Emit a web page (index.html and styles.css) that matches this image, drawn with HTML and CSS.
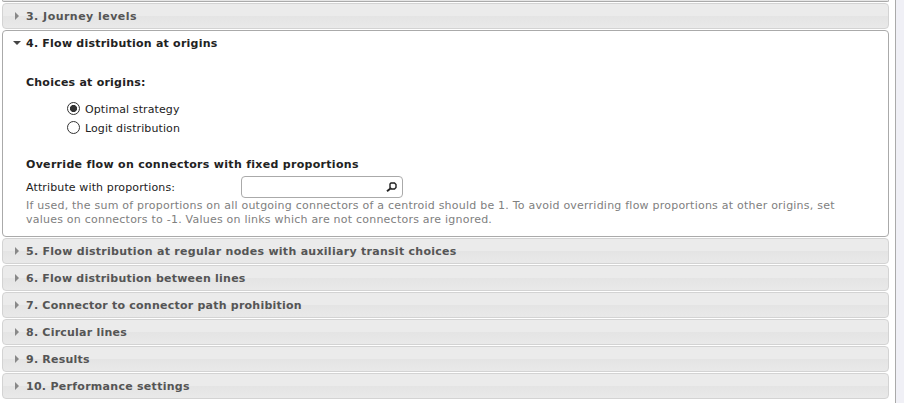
FILE: index.html
```html
<!DOCTYPE html>
<html lang="en">
<head>
<meta charset="utf-8">
<title>Transit assignment</title>
<link rel="stylesheet" href="styles.css">
</head>
<body>
<main class="page">
  <div class="accordion">
    <div class="previous"></div>
    <h3 class="header header-journey"><svg class="arrow" viewBox="0 0 8 8"><path d="M2 0v8l4-4z"/></svg><span>3. Journey levels</span></h3>
    <section class="panel">
      <h3 class="panel-title"><svg class="arrow" viewBox="0 0 8 8"><path d="M0 2h8L4 6z"/></svg><span>4. Flow distribution at origins</span></h3>
      <div class="content">
        <h4 class="choices-title">Choices at origins:</h4>
        <div class="choices">
          <label class="choice"><input type="radio" name="choice" checked><span>Optimal strategy</span></label>
          <label class="choice"><input type="radio" name="choice"><span>Logit distribution</span></label>
        </div>
        <h4 class="override-title">Override flow on connectors with fixed proportions</h4>
        <div class="field">
          <span class="field-label">Attribute with proportions:</span>
          <div class="picker"><svg class="search" viewBox="0 0 11 10"><path class="lens" d="M5 1h3.500L10 2.500v3L8.500 7H5.500L4 5.500V2z"/><path class="handle" d="M4.500 6.500L1 9.200"/></svg></div>
        </div>
        <p class="hint">If used, the sum of proportions on all outgoing connectors of a centroid should be 1. To avoid overriding flow proportions at other origins, set<br>values on connectors to -1. Values on links which are not connectors are ignored.</p>
      </div>
    </section>
    <h3 class="header header-nodes"><svg class="arrow" viewBox="0 0 8 8"><path d="M2 0v8l4-4z"/></svg><span>5. Flow distribution at regular nodes with auxiliary transit choices</span></h3>
    <h3 class="header"><svg class="arrow" viewBox="0 0 8 8"><path d="M2 0v8l4-4z"/></svg><span>6. Flow distribution between lines</span></h3>
    <h3 class="header"><svg class="arrow" viewBox="0 0 8 8"><path d="M2 0v8l4-4z"/></svg><span>7. Connector to connector path prohibition</span></h3>
    <h3 class="header"><svg class="arrow" viewBox="0 0 8 8"><path d="M2 0v8l4-4z"/></svg><span>8. Circular lines</span></h3>
    <h3 class="header"><svg class="arrow" viewBox="0 0 8 8"><path d="M2 0v8l4-4z"/></svg><span>9. Results</span></h3>
    <h3 class="header header-nodes"><svg class="arrow" viewBox="0 0 8 8"><path d="M2 0v8l4-4z"/></svg><span>10. Performance settings</span></h3>
  </div>
</main>
</body>
</html>
```
FILE: styles.css
```css
* { box-sizing: border-box; }
body {
  margin: 0;
  background: #f0f0f6;
  color: #222;
  font: 11px/14px Verdana, "DejaVu Sans", sans-serif;
  overflow: hidden;
}
h3, h4, p { margin: 0; font-size: 11px; }
h3, h4 { letter-spacing: 0.23px; }
.page {
  width: 896px;
  height: 403px;
  padding-left: 2px;
  background: #fff;
  border-right: 1px solid #aaa;
}
.accordion { width: 887px; }
.previous {
  height: 2px;
  margin-bottom: 1px;
  background: #e6e6e6;
  border: 1px solid #aaa;
  border-top: 0;
  border-radius: 0 0 4px 4px;
}
.header {
  display: flex;
  align-items: center;
  height: 26px;
  margin-bottom: 1px;
  padding-left: 10px;
  border: 1px solid #d3d3d3;
  border-radius: 4px;
  background: linear-gradient(#ebebeb 0 50%, #e4e4e4 50%, #e9e9e9 100%);
  color: #555;
}
.header span, .panel-title span { padding-top: 2px; }
.header-journey { letter-spacing: 0.47px; }
.header-nodes { letter-spacing: 0.28px; }
.arrow { width: 8px; height: 8px; margin-right: 5px; fill: #888; }
.panel {
  height: 207px;
  margin: 1px 0;
  border: 1px solid #aaa;
  border-radius: 4px;
}
.panel-title {
  display: flex;
  align-items: center;
  height: 24px;
  padding-left: 10px;
}
.panel-title .arrow { fill: #454545; }
.content { padding: 21px 23px 0; }
.choices { padding: 9px 0 0 41px; }
.choice { display: flex; align-items: center; height: 19px; letter-spacing: 0.1px; }
.choice span { padding-top: 2px; }
.choice input {
  appearance: none;
  width: 13px;
  height: 13px;
  margin: 0 5px 0 0;
  border: 1px solid #333;
  border-radius: 50%;
  background: #fff;
}
.choice input:checked { background: radial-gradient(circle, #333 3.2px, #fff 3.9px); }
.override-title { margin-top: 21px; letter-spacing: 0.3px; }
.field { display: flex; align-items: center; height: 22px; margin-top: 4px; }
.field-label { width: 215px; padding-top: 2px; letter-spacing: 0.13px; }
.picker {
  display: flex;
  align-items: center;
  justify-content: flex-end;
  width: 162px;
  height: 22px;
  padding-right: 5px;
  border: 1px solid #aaa;
  border-radius: 4px;
}
.search { width: 11px; height: 10px; fill: none; stroke: #222; }
.lens { stroke-width: 1.400; }
.handle { stroke-width: 2; }
.hint { padding-top: 1px; color: #808080; white-space: nowrap; letter-spacing: 0.225px; }
```
